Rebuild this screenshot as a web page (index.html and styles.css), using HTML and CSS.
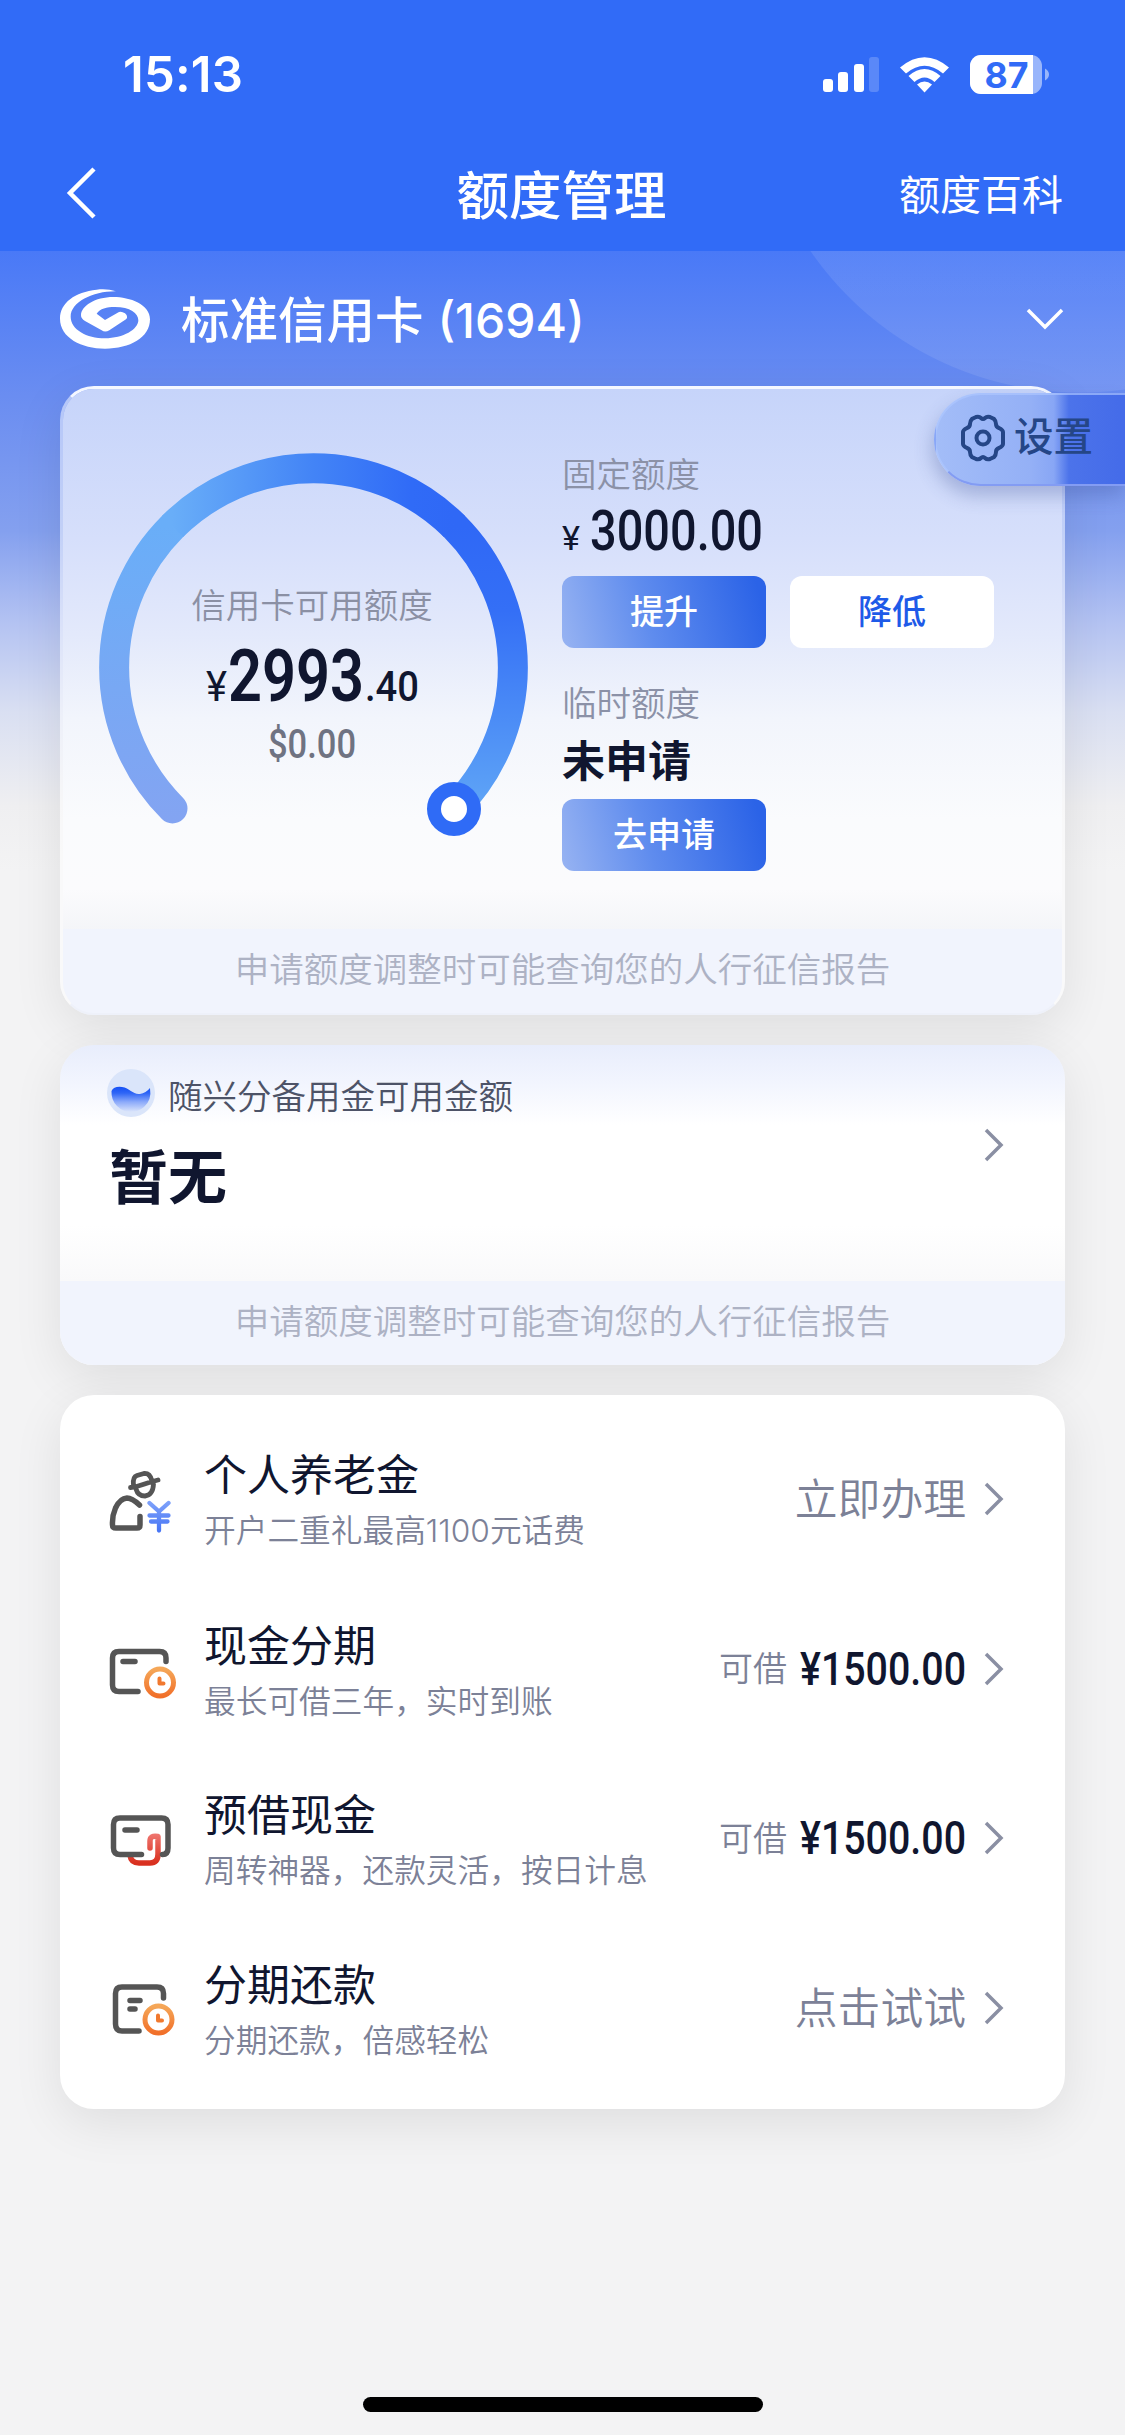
FILE: index.html
```html
<!DOCTYPE html>
<html lang="zh-CN">
<head>
<meta charset="utf-8">
<title>额度管理</title>
<link rel="stylesheet" href="styles.css">
</head>
<body>
<div class="page">
  <header class="header">
    <div class="status">
      <span class="time">15:13</span>
      <svg class="status-icons" width="230" height="44" viewBox="0 0 230 44" fill="#fff">
        <rect x="3" y="26" width="10" height="13" rx="3"/>
        <rect x="18" y="19" width="10" height="20" rx="3"/>
        <rect x="34" y="11" width="10" height="28" rx="3"/>
        <rect x="49" y="4" width="10" height="35" rx="3" opacity=".2"/>
        <path d="M80 14.500Q104.500-6 129 14.500L123 20.500Q104.500 5 86 20.500Z"/>
        <path d="M88.500 23Q104.500 9 120.500 23L114.500 29Q104.500 20 94.500 29Z"/>
        <path d="M97 31.500Q104.500 25.500 112 31.500L104.500 39.500Z"/>
        <rect x="150" y="2" width="72" height="39" rx="11" opacity=".5"/>
        <path d="M161 2H213V41H161A11 11 0 0 1 150 30V13A11 11 0 0 1 161 2Z"/>
        <path d="M225 15.500Q229 18 229 21.500Q229 25 225 27.500Z" opacity=".5"/>
        <text class="battery" x="186.500" y="35" text-anchor="middle" textLength="44" lengthAdjust="spacingAndGlyphs">87</text>
      </svg>
    </div>
    <nav class="nav">
      <svg class="back" width="32" height="56" viewBox="0 0 32 56"><path d="M29 4L5 28L29 52"/></svg>
      <h1 class="title">额度管理</h1>
      <a class="wiki">额度百科</a>
    </nav>
  </header>

  <main class="content">
    <section class="account">
      <svg class="logo" width="90" height="60" viewBox="30 39 270 180"><path fill="#fff" d="M198 46C180 40 160 38 140 41C75 48 30 80 30 128C30 185 95 218 165 218C240 218 300 185 300 130C300 85 240 63 190 63C135 63 93 90 93 118C93 125 97 130 105 135L155 163Q165 170 178 163L228 130Q236 122 225 112Q212 103 203 110L165 132L140 113C150 98 170 93 195 93C240 93 265 112 265 133C265 160 220 187 165 187C110 187 62 160 62 122C62 78 130 45 198 46Z"/></svg>
      <span class="account-name">标准信用卡 <span class="latin">(1694)</span></span>
      <svg class="down" width="40" height="26" viewBox="0 0 40 26"><path d="M3 4L20 21L37 4"/></svg>
    </section>

    <section class="card quota">
      <div class="quota-body">
        <div class="gauge">
          <svg width="450" height="440" viewBox="88 440 450 440">
            <defs>
              <linearGradient id="arcLeft" gradientUnits="userSpaceOnUse" x1="0" y1="820" x2="0" y2="526"><stop offset="0" stop-color="#83a4f2"/><stop offset=".45" stop-color="#78a8f4"/><stop offset="1" stop-color="#69aef8"/></linearGradient>
              <linearGradient id="arcTop" gradientUnits="userSpaceOnUse" x1="172" y1="0" x2="454" y2="0"><stop offset="0" stop-color="#69aef8"/><stop offset=".5" stop-color="#4384f6"/><stop offset=".85" stop-color="#306bf7"/><stop offset="1" stop-color="#2f68f6"/></linearGradient>
              <linearGradient id="arcRight" gradientUnits="userSpaceOnUse" x1="0" y1="526" x2="0" y2="809"><stop offset="0" stop-color="#2f68f6"/><stop offset=".3" stop-color="#346ff6"/><stop offset="1" stop-color="#5fa5f6"/></linearGradient>
            </defs>
            <g fill="none" stroke-width="30">
              <path stroke="url(#arcLeft)" stroke-linecap="round" d="M172.500 808.500A199.500 199.500 0 0 1 172.500 526.500"/>
              <path stroke="url(#arcRight)" stroke-linecap="round" d="M454.500 526.500A199.500 199.500 0 0 1 454.500 808.500"/>
              <path stroke="url(#arcTop)" d="M172.500 526.500A199.500 199.500 0 0 1 454.500 526.500"/>
            </g>
            <circle cx="454" cy="809" r="20" fill="#fff" stroke="#2f6bf6" stroke-width="14"/>
            <text class="gauge-label" x="312" y="618" text-anchor="middle">信用卡可用额度</text>
            <g class="num">
              <text x="206" y="701" font-size="43" font-weight="400" textLength="21" lengthAdjust="spacingAndGlyphs">¥</text>
              <text x="228" y="701" font-size="73" font-weight="600" textLength="136" lengthAdjust="spacingAndGlyphs">2993</text>
              <text x="365" y="701" font-size="43" font-weight="500" textLength="54" lengthAdjust="spacingAndGlyphs">.40</text>
              <text class="usd" x="268" y="758" font-size="40" font-weight="500" textLength="88" lengthAdjust="spacingAndGlyphs">$0.00</text>
            </g>
          </svg>
        </div>
        <div class="limits">
          <span class="label">固定额度</span>
          <svg class="num fixed" width="210" height="70" viewBox="0 0 210 70">
            <text x="0" y="54" font-size="34" font-weight="400" textLength="18" lengthAdjust="spacingAndGlyphs">¥</text>
            <text x="28" y="54" font-size="55" font-weight="500" textLength="173" lengthAdjust="spacingAndGlyphs">3000.00</text>
          </svg>
          <div class="buttons">
            <button class="btn primary">提升</button>
            <button class="btn plain">降低</button>
          </div>
          <span class="label temp">临时额度</span>
          <strong class="temp-state">未申请</strong>
          <button class="btn primary">去申请</button>
        </div>
      </div>
      <p class="notice">申请额度调整时可能查询您的人行征信报告</p>
      <div class="settings">
        <svg width="46" height="50" viewBox="-23 -25 46 50"><path d="M-7 -21Q-4 -22 -2 -20Q0 -18 2 -20Q4 -22 7 -21L11 -19Q13 -17 13 -14Q13 -11 16 -10Q20 -8 20 -6V6Q20 8 16 10Q13 11 13 14Q13 17 11 19L7 21Q4 22 2 20Q0 18 -2 20Q-4 22 -7 21L-11 19Q-13 17 -13 14Q-13 11 -16 10Q-20 8 -20 6V-6Q-20 -8 -16 -10Q-13 -11 -13 -14Q-13 -17 -11 -19Z"/><circle r="6.500"/></svg>
        <span>设置</span>
      </div>
    </section>

    <section class="card reserve">
      <div class="reserve-body">
        <div class="reserve-main">
          <div class="reserve-label">
            <svg width="48" height="50" viewBox="0 0 48 50">
              <defs><linearGradient id="wave" x1="0" y1="0" x2="0" y2="1"><stop offset="0" stop-color="#1450f5"/><stop offset=".25" stop-color="#2f66f6"/><stop offset=".6" stop-color="#8caafa"/><stop offset="1" stop-color="#dbe5fb"/></linearGradient></defs>
              <circle cx="24" cy="25" r="24" fill="#dae5fa"/>
              <path fill="url(#wave)" d="M4.500 23Q7 18 15 19C23 20 26 27 33 26Q39 25 43 20Q45 32 37 39Q31 44 24 44Q16 44 10 38Q4 32 4.500 23Z"/>
            </svg>
            <span>随兴分备用金可用金额</span>
          </div>
          <strong class="reserve-value">暂无</strong>
        </div>
        <svg class="chevron" width="22" height="36" viewBox="0 0 22 36"><path d="M3 3L18 18L3 33"/></svg>
      </div>
      <p class="notice">申请额度调整时可能查询您的人行征信报告</p>
    </section>

    <section class="card services">
      <svg width="0" height="0" class="defs"><defs>
        <linearGradient id="orange" x1="0" y1="0" x2="0" y2="1"><stop offset="0" stop-color="#f5a758"/><stop offset="1" stop-color="#f1702a"/></linearGradient>
        <linearGradient id="red" gradientUnits="userSpaceOnUse" x1="0" y1="32" x2="0" y2="65"><stop offset="0" stop-color="#f27f7a"/><stop offset="1" stop-color="#d9301f"/></linearGradient>
        <linearGradient id="blue" gradientUnits="userSpaceOnUse" x1="0" y1="42" x2="0" y2="72"><stop offset="0" stop-color="#7fa2fa"/><stop offset="1" stop-color="#4876f5"/></linearGradient>
      </defs></svg>

      <div class="row">
        <svg class="icon" width="90" height="90" viewBox="0 0 90 90">
          <path d="M39.500 46Q32 39 27 39Q20 39.500 15.500 49Q12 57 12.500 66Q12.500 69 16 69H37Q40 69 40 66V57.500"/>
          <path class="thin" d="M30.500 28.500Q36 28 43 25.500T58 21M33.500 26Q32.500 18 37 16.500L44 14.500Q50 14 52 22M36 30Q38 37 45 37Q53 36 53.500 25"/>
          <path class="yen" d="M49.500 44L59 52.500L68.500 44M49.500 56.500H68.500M51 62.500H67.500M59 53V71.500"/>
        </svg>
        <div class="info"><span class="name">个人养老金</span><span class="desc">开户二重礼最高<span class="latin">1100</span>元话费</span></div>
        <span class="action">立即办理</span>
        <svg class="chevron" width="22" height="36" viewBox="0 0 22 36"><path d="M3 3L18 18L3 33"/></svg>
      </div>

      <div class="row">
        <svg class="icon" width="90" height="90" viewBox="0 0 90 90">
          <path d="M66 33.500V30Q66 23.500 59.500 23.500H19Q12.500 23.500 12.500 30V57Q12.500 63.500 19 63.500H38M23 33.500H35"/>
          <circle class="clock" cx="60" cy="54.500" r="13.500"/><path class="hand" d="M59.500 50.500V55.500H63.500"/>
        </svg>
        <div class="info"><span class="name">现金分期</span><span class="desc">最长可借三年，实时到账</span></div>
        <span class="borrow">可借</span>
        <svg class="num amount" width="170" height="70" viewBox="0 0 170 70"><text x="1" y="51" font-size="46" font-weight="500" textLength="166" lengthAdjust="spacingAndGlyphs">¥1500.00</text></svg>
        <svg class="chevron" width="22" height="36" viewBox="0 0 22 36"><path d="M3 3L18 18L3 33"/></svg>
      </div>

      <div class="row">
        <svg class="icon" width="90" height="90" viewBox="0 0 90 90">
          <path class="red" d="M30 57.500Q31 65 39 65H50Q58 65 58 56V38.500Q50 37 50 43V50"/>
          <path d="M41.500 56.500H20Q13.500 56.500 13.500 50V26.500Q13.500 20 20 20H61.500Q68 20 68 26.500V50Q68 56.500 62.500 56.500M25 32H37"/>
        </svg>
        <div class="info"><span class="name">预借现金</span><span class="desc">周转神器，还款灵活，按日计息</span></div>
        <span class="borrow">可借</span>
        <svg class="num amount" width="170" height="70" viewBox="0 0 170 70"><text x="1" y="51" font-size="46" font-weight="500" textLength="166" lengthAdjust="spacingAndGlyphs">¥1500.00</text></svg>
        <svg class="chevron" width="22" height="36" viewBox="0 0 22 36"><path d="M3 3L18 18L3 33"/></svg>
      </div>

      <div class="row">
        <svg class="icon" width="90" height="90" viewBox="0 0 90 90">
          <path d="M63.500 31V26.500Q63.500 20 57 20H22Q15.500 20 15.500 26.500V57Q15.500 64 22 64H39M30 33.500H40M30 42H35"/>
          <circle class="clock" cx="58.500" cy="52.500" r="13.500"/><path class="hand" d="M58 48.500V53.500H62"/>
        </svg>
        <div class="info"><span class="name">分期还款</span><span class="desc">分期还款，倍感轻松</span></div>
        <span class="action">点击试试</span>
        <svg class="chevron" width="22" height="36" viewBox="0 0 22 36"><path d="M3 3L18 18L3 33"/></svg>
      </div>
    </section>
  </main>
  <div class="home-bar"></div>
</div>
</body>
</html>
```
FILE: styles.css
```css
* { box-sizing: border-box; }
body { margin: 0; font-family: "Noto Sans CJK SC", sans-serif; color: #10162f; }
h1, p { margin: 0; }
svg { display: block; flex: none; }
.page { width: 1125px; height: 2435px; display: flex; flex-direction: column; background: #f3f3f4; overflow: hidden; }
.latin { font-family: Inter, sans-serif; }

.header { height: 251px; background: #316bf7; color: #fff; }
.status { height: 135px; padding: 53px 75px 0 123px; display: flex; justify-content: space-between; align-items: flex-start; }
.time { font: 600 49px/44px Inter, sans-serif; letter-spacing: .2px; }
.battery { font: 700 36px Inter, sans-serif; fill: #316bf7; }
.nav { height: 116px; padding: 0 62px 0 65px; display: grid; grid-template-columns: 1fr auto 1fr; align-items: center; }
.back path { fill: none; stroke: #fff; stroke-width: 4.500; }
.title { font-size: 52.500px; font-weight: 500; line-height: 60px; margin: 0 3px 3px 0; transform: translateX(-1px); }
.wiki { font-size: 41px; font-weight: 400; line-height: 60px; justify-self: end; margin-bottom: 3px; }

.content {
  flex: 1; padding: 0 60px;
  background:
    radial-gradient(circle 328px at 1080px -186px, rgba(255,255,255,.09) 327px, transparent 328px),
    linear-gradient(#4979f7 0, #6a8df1 145px, #84a0ef 280px, #b3c2f2 370px, #d9dff2 460px, #efeff1 555px, #f3f3f4 620px);
}
.account { height: 135px; display: flex; align-items: center; color: #fff; }
.account-name { margin-left: 31px; font-size: 48.500px; font-weight: 500; line-height: 60px; flex: 1; white-space: pre; }
.account-name .latin { font-size: 48px; font-weight: 500; margin-left: 3px; }
.down path { fill: none; stroke: #fff; stroke-width: 3.500; }

.card { width: 1005px; border-radius: 34px; margin-bottom: 30px; box-shadow: 0 14px 50px rgba(0,0,0,.085); position: relative; }
.quota {
  height: 629px; border: 3px solid rgba(255,255,255,.5); border-top-color: #f4f7ff; border-bottom-color: #eef1fa;
  background: linear-gradient(#c6d4fa 0, #d6dffb 150px, #e3e9fb 245px, #f2f5fc 330px, #fafbfd 430px, #fbfbfd 500px, #f4f5f8 543px);
  background-clip: padding-box;
}
.quota-body { height: 540px; display: flex; }
.gauge { width: 499px; padding: 51px 0 0 25px; }
.gauge-label { font-size: 34.500px; font-weight: 350; fill: #8b90a4; }
.num text { font-family: Roboto, sans-serif; fill: #10162f; }
.num .usd { fill: #6f7382; }
.limits { padding-top: 63px; display: flex; flex-direction: column; align-items: flex-start; }
.label { font-size: 34.500px; font-weight: 350; line-height: 40px; color: #8b91a7; }
.fixed { margin-top: 4px; }
.buttons { display: flex; gap: 24px; margin-top: 10px; }
.btn { width: 204px; height: 72px; padding: 0 0 4px; border: 0; border-radius: 12px; font: 500 34px/60px "Noto Sans CJK SC", sans-serif; }
.primary { color: #fff; background: linear-gradient(75deg, #97b3f2 0, #5f8cee 42%, #2b63e7 95%); }
.plain { color: #1e5ae8; background: #fff; }
.temp { margin-top: 33px; }
.temp-state { font-size: 43px; font-weight: 700; line-height: 50px; margin: 12px 0 16px; }
.notice { height: 84px; display: flex; align-items: center; justify-content: center; background: #f1f4fd; border-radius: 0 0 31px 31px; font-size: 34.500px; font-weight: 350; color: #adb2c4; padding-bottom: 8px; }
.settings {
  position: absolute; left: 871px; top: 4px; width: 192px; height: 93px; padding: 0 0 4px 24px;
  display: flex; align-items: center; gap: 8px; border-radius: 47px 0 0 47px; border: 2px solid rgba(175,200,255,.65); border-right: 0; border-bottom-color: #839cf3;
  background: linear-gradient(90deg, #a3bdf8 0, #94b0f6 50%, #88a6f5 62%, #4c73ea 70%, #446be9 100%);
  box-shadow: -2px 10px 18px rgba(60,80,150,.3);
  color: #254687; font-size: 39.500px; font-weight: 500; line-height: 50px;
}
.settings svg { fill: none; stroke: #254687; stroke-width: 4; }
.settings span { padding-bottom: 7px; }

.reserve { height: 320px; background: linear-gradient(#e8edfc 0, #f2f5fe 38px, #fff 80px, #fff 180px, #f9f9fa 236px); }
.reserve-body { height: 236px; padding: 23px 60px 0 47px; display: flex; }
.reserve-main { flex: 1; }
.reserve-label { display: flex; align-items: center; gap: 13px; height: 50px; font-size: 34.500px; font-weight: 350; line-height: 50px; color: #4d5367; }
.reserve-label span { padding-top: 2px; }
.reserve-value { display: block; margin: 21px 0 0 2px; font-size: 59px; font-weight: 700; line-height: 70px; }
.reserve-body .chevron { margin-top: 59px; }
.reserve .notice { border-radius: 0 0 34px 34px; }
.chevron path { fill: none; stroke: #8a8fa3; stroke-width: 3.500; }

.services { height: 714px; padding: 25px 60px 0 40px; background: #fff; }
.defs { position: absolute; }
.row { height: 169.500px; display: flex; align-items: center; padding-bottom: 11px; }
.icon { margin: 9px 0 0; }
.icon path { fill: none; stroke: #555; stroke-width: 5.500; stroke-linecap: round; stroke-linejoin: round; }
.icon .thin { stroke-width: 4.800; }
.icon .yen { stroke: url(#blue); stroke-width: 4.300; }
.icon .red { stroke: url(#red); stroke-width: 5.500; }
.icon .clock { fill: #fff; stroke: url(#orange); stroke-width: 5; }
.icon .hand { stroke: #f1792f; stroke-width: 4; }
.info { flex: 1; display: flex; flex-direction: column; margin-left: 14px; }
.name { font-size: 43px; font-weight: 400; line-height: 60px; }
.desc { font-size: 31.700px; font-weight: 350; line-height: 52px; color: #7c8197; }
.action { font-size: 42.800px; font-weight: 350; line-height: 60px; color: #7c8197; margin: 0 17px 6px 0; }
.borrow { font-size: 34px; font-weight: 350; line-height: 50px; color: #7c8197; margin: 0 12px 3px 0; }
.amount { margin-right: 14px; }
.home-bar { position: absolute; left: 363px; top: 2397px; width: 400px; height: 15px; border-radius: 8px; background: #000; }
```
